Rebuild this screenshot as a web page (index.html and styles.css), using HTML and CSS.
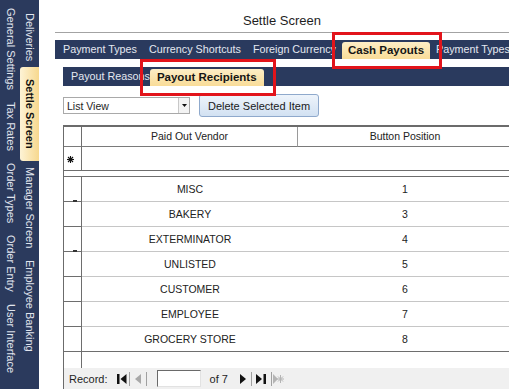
FILE: index.html
```html
<!DOCTYPE html>
<html lang="en">
<head>
    <meta charset="UTF-8">
    <meta name="viewport" content="width=device-width, initial-scale=1.0">
    <title>Settle Screen</title>
    <link rel="stylesheet" href="styles.css">
</head>
<body>
<div class="app">
    <nav class="side">
        <div class="side-col">
            <span class="side-tab">General Settings</span>
            <span class="side-tab">Tax Rates</span>
            <span class="side-tab">Order Types</span>
            <span class="side-tab">Order Entry</span>
            <span class="side-tab">User Interface</span>
        </div>
        <div class="side-col inner">
            <span class="side-tab">Deliveries</span>
            <span class="side-tab active">Settle Screen</span>
            <span class="side-tab">Manager Screen</span>
            <span class="side-tab">Employee Banking</span>
        </div>
    </nav>

    <main class="main">
        <h1 class="title">Settle Screen</h1>

        <div class="tab-bar">
            <span class="tab">Payment Types</span>
            <span class="tab">Currency Shortcuts</span>
            <span class="tab">Foreign Currency</span>
            <span class="tab active marked">Cash Payouts</span>
            <span class="tab">Payment Types</span>
        </div>

        <div class="panel">
            <div class="tab-bar sub">
                <span class="tab">Payout Reasons</span>
                <span class="tab active marked">Payout Recipients</span>
            </div>

            <div class="toolbar">
                <div class="combo">
                    <span>List View</span>
                    <span class="combo-arrow">
                        <svg width="5" height="3" viewBox="0 0 5 3"><polygon points="0,0 5,0 2.5,3" fill="#111"/></svg>
                    </span>
                </div>
                <button class="btn">Delete Selected Item</button>
            </div>

            <div class="sheet">
                <div class="row head">
                    <div class="sel"></div>
                    <div class="cell c1">Paid Out Vendor</div>
                    <div class="cell c2">Button Position</div>
                </div>
                <div class="row new">
                    <div class="sel">
                        <svg width="7" height="7" viewBox="0 0 7 7" stroke="#111" stroke-width="1.1">
                            <line x1="3.5" y1="0" x2="3.5" y2="7"/>
                            <line x1="0" y1="3.5" x2="7" y2="3.5"/>
                            <line x1="1" y1="1" x2="6" y2="6"/>
                            <line x1="6" y1="1" x2="1" y2="6"/>
                        </svg>
                    </div>
                    <div class="cell c1"></div>
                    <div class="cell c2"></div>
                </div>
                <div class="split"></div>

                <div class="row"><div class="sel tick"></div><div class="cell c1">MISC</div><div class="cell c2">1</div></div>
                <div class="row"><div class="sel"></div><div class="cell c1">BAKERY</div><div class="cell c2">3</div></div>
                <div class="row"><div class="sel tick"></div><div class="cell c1">EXTERMINATOR</div><div class="cell c2">4</div></div>
                <div class="row"><div class="sel"></div><div class="cell c1">UNLISTED</div><div class="cell c2">5</div></div>
                <div class="row"><div class="sel"></div><div class="cell c1">CUSTOMER</div><div class="cell c2">6</div></div>
                <div class="row"><div class="sel"></div><div class="cell c1">EMPLOYEE</div><div class="cell c2">7</div></div>
                <div class="row last"><div class="sel"></div><div class="cell c1">GROCERY STORE</div><div class="cell c2">8</div></div>

                <div class="filler"><div class="sel"></div></div>

                <div class="nav">
                    <span class="nav-label">Record:</span>
                    <span class="nav-btn first">
                        <svg width="10" height="10" viewBox="0 0 10 10"><rect x="0" y="0" width="2.5" height="10" fill="#111"/><polygon points="9.5,0 9.5,10 3.5,5" fill="#111"/></svg>
                    </span>
                    <span class="nav-btn prev">
                        <svg width="6" height="10" viewBox="0 0 6 10"><polygon points="6,0 6,10 0,5" fill="#a8a8a8"/></svg>
                    </span>
                    <span class="nav-input"></span>
                    <span class="nav-of">of 7</span>
                    <span class="nav-btn next">
                        <svg width="6" height="10" viewBox="0 0 6 10"><polygon points="0,0 0,10 6,5" fill="#111"/></svg>
                    </span>
                    <span class="nav-btn last-btn">
                        <svg width="10" height="10" viewBox="0 0 10 10"><polygon points="0,0 0,10 6,5" fill="#111"/><rect x="7.5" y="0" width="2.5" height="10" fill="#111"/></svg>
                    </span>
                    <span class="nav-btn add">
                        <svg width="11" height="10" viewBox="0 0 11 10">
                            <polygon points="0,0 0,10 5,5" fill="#b4b4b4"/>
                            <g stroke="#b4b4b4" stroke-width="1">
                                <line x1="7.5" y1="1" x2="7.5" y2="9"/>
                                <line x1="4" y1="5" x2="11" y2="5"/>
                                <line x1="5" y1="2.5" x2="10" y2="7.5"/>
                                <line x1="10" y1="2.5" x2="5" y2="7.5"/>
                            </g>
                        </svg>
                    </span>
                </div>
            </div>
        </div>
    </main>
</div>
</body>
</html>
```

FILE: styles.css
```css
body {
    margin: 0;
    font-family: 'Liberation Sans', Arial, sans-serif;
    background: #fff;
    color: #1e1e1e;
}

.app {
    display: flex;
    height: 389px;
    overflow: hidden;
}

/* Left vertical tab strip */
.side {
    width: 39px;
    flex-shrink: 0;
    display: flex;
    box-sizing: border-box;
    padding-left: 2px;
    background: #2b3a5d;
}

.side-col {
    width: 18px;
    display: flex;
    flex-direction: column;
    padding-top: 2px;
}

.side-col.inner {
    width: 19px;
    padding-top: 7px;
}

.side-tab {
    writing-mode: vertical-rl;
    font-size: 11px;
    line-height: 18px;
    padding: 6px 0;
    color: #e1e5ee;
    white-space: nowrap;
}

.inner .side-tab {
    line-height: 19px;
}

.side-tab.active {
    font-weight: bold;
    color: #111;
    padding: 12px 0;
    background: linear-gradient(to right, #fdf3d6, #f7d88e);
    border-radius: 3px 0 0 3px;
}

/* Main area */
.main {
    flex: 1;
    min-width: 0;
    padding-left: 16px;
    overflow: hidden;
}

.title {
    margin: 0;
    height: 33px;
    box-sizing: border-box;
    padding-top: 13px;
    font-size: 13px;
    font-weight: normal;
    line-height: 15px;
    text-align: center;
    border-bottom: 1px solid #a3a3a3;
}

.tab-bar {
    display: flex;
    height: 19px;
    margin-top: 7px;
    padding-left: 2px;
    background: #2a3a5e;
    white-space: nowrap;
}

.tab {
    flex-shrink: 0;
    padding: 0 6px;
    font-size: 10.75px;
    line-height: 19px;
    color: #e4e8f0;
}

.tab.active {
    margin-top: 2px;
    font-size: 11.5px;
    font-weight: bold;
    line-height: 17px;
    color: #151515;
    background: linear-gradient(#fdeec6, #f9dc98);
    border-radius: 3px 3px 0 0;
}

/* red annotation boxes */
.marked {
    position: relative;
}

.marked::after {
    content: '';
    position: absolute;
    top: -10px;
    bottom: -10px;
    left: -10px;
    right: -12px;
    border: 3px solid #e2141b;
}

.panel {
    padding-left: 8px;
}

.tab-bar.sub {
    margin-top: 8px;
}

.sub .active {
    margin-left: -6px;
    padding: 0 7px;
}

.toolbar {
    display: flex;
    align-items: center;
    gap: 9px;
    height: 23px;
    margin-top: 8px;
}

.combo {
    display: flex;
    align-items: center;
    width: 127px;
    height: 17px;
    box-sizing: border-box;
    padding-left: 3px;
    border: 1px solid #a9a9a9;
    font-size: 10.5px;
}

.combo-arrow {
    display: flex;
    align-items: center;
    justify-content: center;
    width: 10px;
    height: 15px;
    margin-left: auto;
    border-left: 1px solid #c8c8c8;
    background: #f3f3f3;
}

.btn {
    width: 120px;
    height: 23px;
    padding: 0;
    font-family: inherit;
    font-size: 11px;
    color: #1a1a1a;
    background: linear-gradient(#eef4fb, #d2e1f2);
    border: 1px solid #8fa9cc;
    border-radius: 3px;
}

/* Datasheet */
.sheet {
    width: 450px;
    margin-top: 8px;
    border-left: 1px solid #6b6b6b;
    border-top: 2px solid #6b6b6b;
    font-size: 10.5px;
    color: #222;
}

.row {
    display: flex;
}

.row > div {
    height: 25px;
    box-sizing: border-box;
    border-bottom: 1px solid #c6c6c6;
}

.row .sel {
    width: 18px;
    border-right: 1px solid #6e6e6e;
    border-bottom-color: #6e6e6e;
}

/* small leftover marks on the selector lines */
.row .sel.tick {
    position: relative;
}

.row .sel.tick::after {
    content: '';
    position: absolute;
    left: 9px;
    bottom: -1px;
    width: 4px;
    height: 2px;
    background: #333;
}

.cell {
    text-align: center;
    line-height: 24px;
}

.c1 {
    width: 216px;
}

.c2 {
    width: 214px;
}

.row.head > div {
    height: 20px;
    line-height: 19px;
    border-bottom-color: #7a7a7a;
}

.row.head .c1 {
    border-right: 1px solid #9a9a9a;
}

.row.new > div {
    height: 24px;
    border-bottom-color: #6e6e6e;
}

.row.new .sel {
    padding: 6px 0 0 3px;
}

.split {
    height: 6px;
    box-sizing: border-box;
    border-bottom: 1px solid #6e6e6e;
}

.row.last > div {
    border-bottom-color: #6e6e6e;
}

.filler {
    height: 16px;
}

.filler .sel {
    width: 18px;
    height: 16px;
    box-sizing: border-box;
    border-right: 1px solid #6e6e6e;
}

/* Record navigation */
.nav {
    display: flex;
    align-items: center;
    height: 21px;
    padding-left: 5px;
    background: #f0f0f0;
    color: #1e1e1e;
    font-size: 11px;
}

.nav-btn {
    display: flex;
    align-items: center;
    justify-content: center;
    height: 14px;
    border-right: 1px solid #a0a0a0;
}

.nav-btn.first {
    width: 14px;
    margin-left: 7px;
}

.nav-btn.prev {
    width: 16px;
}

.nav-input {
    width: 44px;
    height: 17px;
    margin-left: 10px;
    box-sizing: border-box;
    background: #fff;
    border: 1px solid #e2e2e2;
    border-top-color: #6a6a6a;
    border-left-color: #6a6a6a;
}

.nav-of {
    margin-left: 9px;
}

.nav-btn.next {
    width: 15px;
    margin-left: 8px;
}

.nav-btn.last-btn {
    width: 19px;
}

.nav-btn.add {
    width: 14px;
    border-right: none;
}
```
